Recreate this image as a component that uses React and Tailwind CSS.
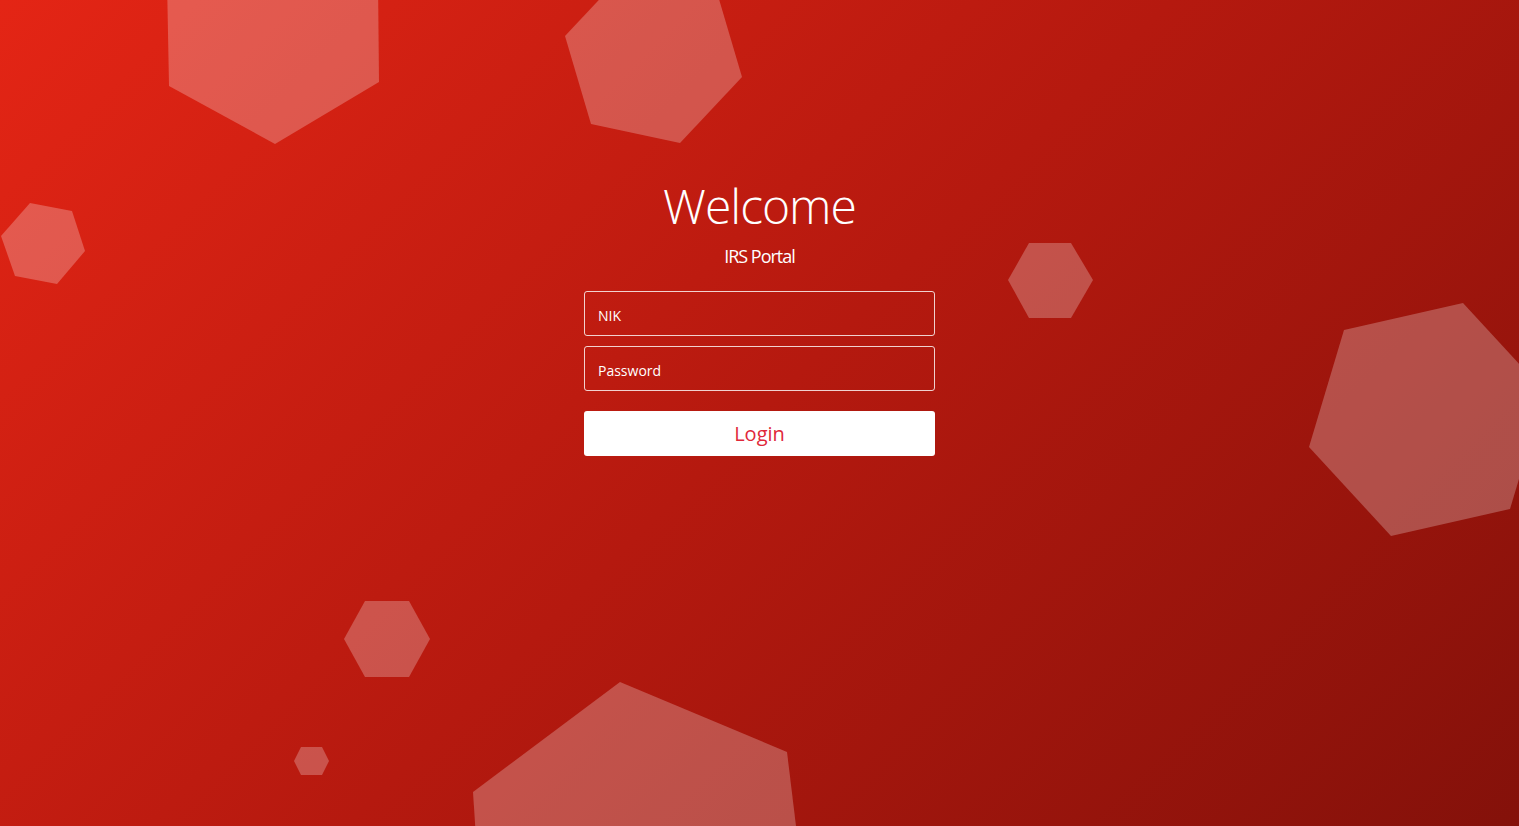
import React from 'react';

const hexes = [
  '167,-20 378,-20 379,82 275,144 169,86',
  '30,203 72,211 85,251 57,284 15,276 1,236',
  '565,36 591,124 680,143 742,77 716,-11 627,-30',
  '1008,280 1029,243 1071,243 1093,280 1071,318 1029,318',
  '1344,330 1463,303 1545,392 1510,509 1391,536 1309,447',
  '344,639 365,601 409,601 430,639 409,677 365,677',
  '294,761 301,747 322,747 329,761 322,775 301,775',
  '473,792 620,682 787,752 805,900 480,900',
];

export default function App() {
  return (
    <div className="relative w-full h-screen overflow-hidden bg-[linear-gradient(135deg,#e42515_0%,#b5190f_50%,#84110a_100%)] font-['Open_Sans',sans-serif] text-white">
      {/* floating hexagons */}
      <svg className="absolute inset-0 pointer-events-none" width="1519" height="826" viewBox="0 0 1519 826">
        {hexes.map((p, i) => (
          <polygon key={i} points={p} fill="#ffffff" fillOpacity="0.25" />
        ))}
      </svg>

      <div className="relative flex flex-col items-center pt-[178px]">
        <h1 className="text-[48px] leading-[56px] font-light tracking-[-1px]">Welcome</h1>
        <p className="mt-[10px] text-[18px] leading-[24px] tracking-[-1px]">IRS Portal</p>

        <form className="mt-[23px] w-[351px] flex flex-col" onSubmit={(e) => e.preventDefault()}>
          <input
            type="text"
            placeholder="NIK"
            className="h-[45px] rounded-[3px] border border-white/80 bg-transparent px-[13px] pt-[4px] text-[14px] text-white placeholder:text-white outline-none"
          />
          <input
            type="password"
            placeholder="Password"
            className="mt-[10px] h-[45px] rounded-[3px] border border-white/80 bg-transparent px-[13px] pt-[4px] text-[14px] text-white placeholder:text-white outline-none"
          />
          <button
            type="submit"
            className="mt-[20px] h-[45px] rounded-[3px] bg-white text-[20px] text-[#e0283a]"
          >
            Login
          </button>
        </form>
      </div>
    </div>
  );
}
